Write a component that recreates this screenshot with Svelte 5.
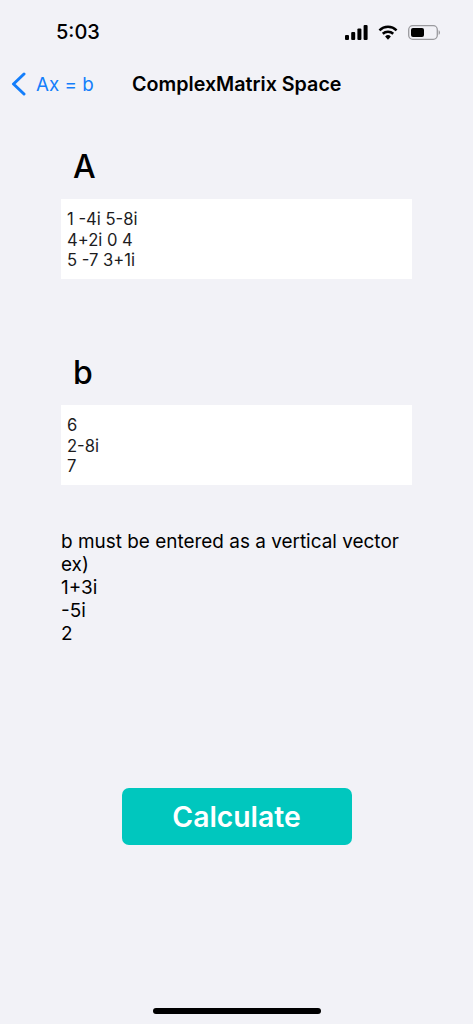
<script>
	const matrixA = ["1 -4i 5-8i", "4+2i 0 4", "5 -7 3+1i"];
	const vectorB = ["6", "2-8i", "7"];
	const hint = ["b must be entered as a vertical vector", "ex)", "1+3i", "-5i", "2"];
</script>

<div class="screen">
	<div class="status">
		<span class="time">5:03</span>
		<div class="statusIcons">
			<svg width="23" height="15" viewBox="0 0 23 15">
				<rect x="0" y="10" width="4" height="5" rx="1.1" />
				<rect x="6.2" y="7" width="4" height="8" rx="1.1" />
				<rect x="12.4" y="3.5" width="4" height="11.5" rx="1.1" />
				<rect x="18.6" y="0" width="4" height="15" rx="1.1" />
			</svg>
			<svg width="20" height="15" viewBox="0 0 21 15">
				<path d="M1.5 5.2a13 13 0 0 1 18 0" fill="none" stroke="#000" stroke-width="2.6" />
				<path d="M5 8.8a8 8 0 0 1 11 0" fill="none" stroke="#000" stroke-width="2.6" />
				<path d="M10.5 15l-3-3.4a4.4 4.4 0 0 1 6 0z" />
			</svg>
			<svg width="32" height="15" viewBox="0 0 32 15">
				<rect x="0.7" y="0.7" width="28.6" height="13.6" rx="4" fill="none" stroke="#9a9a9e" stroke-width="1.3" />
				<rect x="3" y="3" width="13" height="9" rx="2" />
				<path d="M30.6 5.2c.9.4 1.4 1.2 1.4 2.3s-.5 1.9-1.4 2.3z" fill="#9a9a9e" />
			</svg>
		</div>
	</div>

	<nav class="nav">
		<div class="back">
			<svg width="15" height="24" viewBox="0 0 15 24">
				<path d="M13 2L2.5 12 13 22" fill="none" stroke="#147efb" stroke-width="3" stroke-linecap="round" stroke-linejoin="round" />
			</svg>
			<span>Ax = b</span>
		</div>
		<div class="title">ComplexMatrix Space</div>
	</nav>

	<main class="content">
		<h2 class="label">A</h2>
		<div class="field">
			{#each matrixA as line}
				<div>{line}</div>
			{/each}
		</div>

		<h2 class="label second">b</h2>
		<div class="field">
			{#each vectorB as line}
				<div>{line}</div>
			{/each}
		</div>

		<div class="hint">
			{#each hint as line}
				<div>{line}</div>
			{/each}
		</div>
	</main>

	<button class="calc">Calculate</button>

	<div class="homeBar"></div>
</div>

<style>
	:global(body) {
		margin: 0;
		background: #f2f2f7;
	}

	.screen {
		display: flex;
		flex-direction: column;
		height: 1024px;
		background: #f2f2f7;
		color: #000;
		font-family: Inter, "Liberation Sans", sans-serif;
		overflow: hidden;
	}

	.status {
		display: flex;
		justify-content: space-between;
		align-items: center;
		height: 30px;
		padding: 17px 33px 0 56px;
	}

	.time {
		font-size: 20px;
		font-weight: 500;
	}

	.statusIcons {
		display: flex;
		align-items: center;
		gap: 10px;
	}

	.nav {
		display: flex;
		align-items: center;
		height: 30px;
		margin-top: 22px;
		padding-left: 11px;
	}

	.back {
		display: flex;
		align-items: center;
		gap: 10px;
		width: 121px;
		color: #147efb;
		font-size: 18.8px;
	}

	.title {
		font-size: 19.7px;
		font-weight: 600;
	}

	.content {
		display: flex;
		flex-direction: column;
		padding: 0 61px;
	}

	.label {
		margin: 43px 0 7px 12px;
		height: 50px;
		font-size: 32px;
		font-weight: 500;
		line-height: 50px;
	}

	.second {
		margin-top: 69px;
	}

	.field {
		box-sizing: border-box;
		height: 80px;
		padding: 10px 6px;
		background: #fff;
		font-size: 16.6px;
		line-height: 20.5px;
		color: #1c1c1e;
	}

	.hint {
		margin-top: 45px;
		font-size: 18.95px;
		line-height: 23px;
	}

	.calc {
		align-self: center;
		width: 230px;
		height: 57px;
		margin-top: 143px;
		border: 0;
		border-radius: 7px;
		background: #00c7be;
		color: #fff;
		font-family: inherit;
		font-size: 28.3px;
		font-weight: 600;
	}

	.homeBar {
		align-self: center;
		width: 168px;
		height: 6px;
		margin-top: auto;
		margin-bottom: 10px;
		border-radius: 3px;
		background: #000;
	}
</style>
